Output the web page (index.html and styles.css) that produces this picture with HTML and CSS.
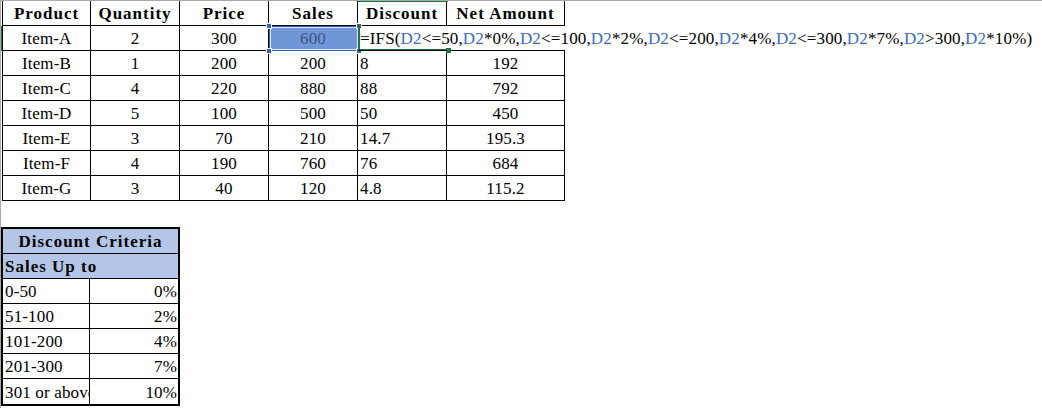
FILE: index.html
```html
<!DOCTYPE html>
<html>
<head>
<meta charset="utf-8">
<link rel="stylesheet" href="styles.css">
</head>
<body>
<div class="sheet">
  <div class="t1">
    <div class="c h">Product</div>
    <div class="c h">Quantity</div>
    <div class="c h">Price</div>
    <div class="c h">Sales</div>
    <div class="c h">Discount</div>
    <div class="c h">Net Amount</div>

    <div class="c">Item-A</div>
    <div class="c">2</div>
    <div class="c">300</div>
    <div class="c sel">600</div>
    <div class="c l formula">=IFS(<span class="ref">D2</span>&lt;=50,<span class="ref">D2</span>*0%,<span class="ref">D2</span>&lt;=100,<span class="ref">D2</span>*2%,<span class="ref">D2</span>&lt;=200,<span class="ref">D2</span>*4%,<span class="ref">D2</span>&lt;=300,<span class="ref">D2</span>*7%,<span class="ref">D2</span>&gt;300,<span class="ref">D2</span>*10%)</div>
    <div class="c empty"></div>

    <div class="c">Item-B</div><div class="c">1</div><div class="c">200</div><div class="c">200</div><div class="c l">8</div><div class="c">192</div>
    <div class="c">Item-C</div><div class="c">4</div><div class="c">220</div><div class="c">880</div><div class="c l">88</div><div class="c">792</div>
    <div class="c">Item-D</div><div class="c">5</div><div class="c">100</div><div class="c">500</div><div class="c l">50</div><div class="c">450</div>
    <div class="c">Item-E</div><div class="c">3</div><div class="c">70</div><div class="c">210</div><div class="c l">14.7</div><div class="c">195.3</div>
    <div class="c">Item-F</div><div class="c">4</div><div class="c">190</div><div class="c">760</div><div class="c l">76</div><div class="c">684</div>
    <div class="c">Item-G</div><div class="c">3</div><div class="c">40</div><div class="c">120</div><div class="c l">4.8</div><div class="c">115.2</div>

    <div class="selbox">
      <span class="hd tl"></span><span class="hd tr"></span><span class="hd bl"></span><span class="hd br"></span>
    </div>
    <div class="active"><span class="fill"></span></div>
    <div class="colmark"></div>
    <div class="rowmark"></div>
  </div>

  <div class="t2">
    <div class="d title">Discount Criteria</div>
    <div class="d sub">Sales Up to</div>
    <div class="d">0-50</div><div class="d r">0%</div>
    <div class="d">51-100</div><div class="d r">2%</div>
    <div class="d">101-200</div><div class="d r">4%</div>
    <div class="d">201-300</div><div class="d r">7%</div>
    <div class="d clip">301 or above</div><div class="d r">10%</div>
  </div>
</div>
</body>
</html>
```

FILE: styles.css
```css
html, body {
  margin: 0;
  padding: 0;
  background: #ffffff;
}

.sheet {
  width: 1042px;
  height: 408px;
  box-sizing: border-box;
  border-top: 1px solid #a9a9a9;
  border-left: 1px solid #a9a9a9;
  font-family: "Liberation Serif", "Times New Roman", serif;
  font-size: 17px;
  letter-spacing: 0.15px;
  color: #000;
  overflow: hidden;
}

.t1 {
  position: relative;
  display: grid;
  grid-template-columns: 88px 89px 89px 89px 89px 118px;
  grid-auto-rows: 25px;
  width: 564px;
  margin-left: 1px;
  border-left: 1px solid #000;
  box-sizing: border-box;
}

.c {
  box-sizing: border-box;
  border-right: 1px solid #000;
  border-bottom: 1px solid #000;
  display: flex;
  align-items: center;
  justify-content: center;
  white-space: nowrap;
  line-height: 1;
  padding-top: 1px;
}

.c.h {
  font-weight: bold;
  letter-spacing: 1px;
}

.c.l {
  justify-content: flex-start;
  padding-left: 2px;
}

.c.formula {
  border-right: none;
  overflow: visible;
  position: relative;
  z-index: 2;
}

.c.empty {
  border-right: none;
}

.ref {
  color: #3a6cc0;
}

.c.sel {
  background: #7096d8;
  color: #3b5686;
}

.selbox {
  position: absolute;
  left: 266px;
  top: 25px;
  width: 90px;
  height: 25px;
  box-sizing: border-box;
  border: 1px solid #2f63b6;
  box-shadow: inset 0 0 0 1px #dce6f6;
}

.hd {
  position: absolute;
  width: 6px;
  height: 6px;
  background: #2f63b6;
  border: 1px solid #fff;
  box-sizing: border-box;
}
.hd.tl { left: -4px; top: -4px; }
.hd.tr { right: -4px; top: -4px; }
.hd.bl { left: -4px; bottom: -4px; }
.hd.br { right: -4px; bottom: -4px; }

.active {
  position: absolute;
  left: 355px;
  top: 24px;
  width: 90px;
  height: 26px;
  box-sizing: border-box;
  border-left: 2px solid #217346;
  border-bottom: 2px solid #217346;
}

.fill {
  position: absolute;
  right: -3px;
  bottom: -4px;
  width: 5px;
  height: 5px;
  background: #217346;
}

.colmark {
  position: absolute;
  left: 355px;
  top: -1px;
  width: 90px;
  height: 2px;
  background: #217346;
}

.rowmark {
  position: absolute;
  left: -3px;
  top: 25px;
  width: 2px;
  height: 25px;
  background: #217346;
}

.t2 {
  display: grid;
  grid-template-columns: 87px 88px;
  grid-auto-rows: 25px;
  width: 179px;
  margin-top: 26px;
  margin-left: 0;
  border: 2px solid #000;
  box-sizing: border-box;
}

.d {
  box-sizing: border-box;
  border-bottom: 1px solid #000;
  display: flex;
  align-items: center;
  padding-left: 2px;
  white-space: nowrap;
  overflow: hidden;
  line-height: 1;
  padding-top: 1px;
}

.d:nth-child(odd):not(.title):not(.sub) {
  border-right: 1px solid #000;
}

.d:last-child, .d:nth-last-child(2) {
  border-bottom: none;
}

.d.title {
  grid-column: 1 / 3;
  justify-content: center;
  font-weight: bold;
  letter-spacing: 1px;
  background: #b4c6e7;
  padding-left: 0;
}

.d.sub {
  grid-column: 1 / 3;
  font-weight: bold;
  letter-spacing: 1px;
  background: #b4c6e7;
}

.d.r {
  justify-content: flex-end;
  padding-left: 0;
  padding-right: 1px;
}

.d.clip {
  text-overflow: clip;
}
```
